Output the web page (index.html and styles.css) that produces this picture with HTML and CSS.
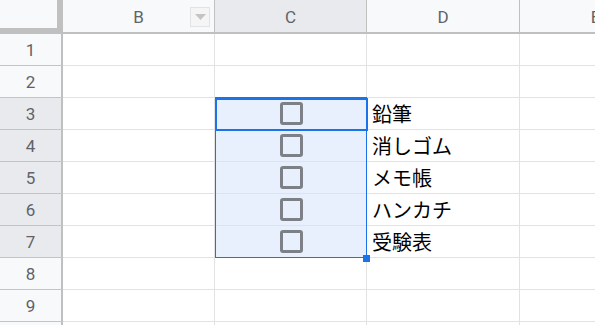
FILE: index.html
```html
<!DOCTYPE html>
<html lang="ja">
<head>
<meta charset="utf-8">
<link rel="stylesheet" href="styles.css">
</head>
<body>
<div class="sheet">
  <div class="corner"></div>
  <div class="colhead">B<span class="filter"><svg width="11" height="6" viewBox="0 0 11 6"><path d="M0 0H11L5.5 6Z" fill="#c4c4c4"/></svg></span></div>
  <div class="colhead sel">C</div>
  <div class="colhead">D</div>
  <div class="colhead">E</div>

  <div class="rowhead">1</div><div class="cell"></div><div class="cell"></div><div class="cell"></div><div class="cell"></div>
  <div class="rowhead">2</div><div class="cell"></div><div class="cell"></div><div class="cell"></div><div class="cell"></div>

  <div class="rowhead sel">3</div><div class="cell"></div><div class="cell hl"><span class="cb"></span></div><div class="cell text">鉛筆</div><div class="cell"></div>
  <div class="rowhead sel">4</div><div class="cell"></div><div class="cell hl"><span class="cb"></span></div><div class="cell text">消しゴム</div><div class="cell"></div>
  <div class="rowhead sel">5</div><div class="cell"></div><div class="cell hl"><span class="cb"></span></div><div class="cell text">メモ帳</div><div class="cell"></div>
  <div class="rowhead sel">6</div><div class="cell"></div><div class="cell hl"><span class="cb"></span></div><div class="cell text">ハンカチ</div><div class="cell"></div>
  <div class="rowhead sel">7</div><div class="cell"></div><div class="cell hl"><span class="cb"></span></div><div class="cell text">受験表</div><div class="cell"></div>

  <div class="rowhead">8</div><div class="cell"></div><div class="cell"></div><div class="cell"></div><div class="cell"></div>
  <div class="rowhead">9</div><div class="cell"></div><div class="cell"></div><div class="cell"></div><div class="cell"></div>
  <div class="rowhead"></div><div class="cell"></div><div class="cell"></div><div class="cell"></div><div class="cell"></div>

  <div class="range"></div>
  <div class="active"></div>
  <div class="handle"></div>
</div>
</body>
</html>
```

FILE: styles.css
```css
html, body {
  margin: 0;
  padding: 0;
  background: #ffffff;
  overflow: hidden;
}

.sheet {
  position: relative;
  display: grid;
  grid-template-columns: 63px 152px 152px 153px 152px;
  grid-template-rows: 34px repeat(10, 32px);
  width: 672px;
  font-family: Roboto, "Liberation Sans", Arial, sans-serif;
}

.sheet > div {
  box-sizing: border-box;
}

.corner {
  background: #f8f9fa;
  border-right: 6px solid #c0c0c0;
  border-bottom: 6px solid #c0c0c0;
}

.colhead {
  position: relative;
  background: #f8f9fa;
  border-right: 1px solid #c0c0c0;
  border-bottom: 2px solid #c0c0c0;
  display: flex;
  align-items: center;
  justify-content: center;
  font-size: 17px;
  color: #5f6368;
  padding-top: 1px;
}

.colhead.sel,
.rowhead.sel {
  background: #e8eaed;
}

.filter {
  position: absolute;
  left: 127px;
  top: 7px;
  width: 20px;
  height: 20px;
  box-sizing: border-box;
  border: 1px solid #e3e3e3;
  background: #f5f5f5;
  display: flex;
  align-items: center;
  justify-content: center;
}

.rowhead {
  background: #f8f9fa;
  border-right: 2px solid #c0c0c0;
  border-bottom: 1px solid #c4c4c4;
  display: flex;
  align-items: center;
  justify-content: center;
  font-size: 17px;
  color: #5f6368;
}

.cell {
  border-right: 1px solid #e2e2e2;
  border-bottom: 1px solid #e2e2e2;
  display: flex;
  align-items: center;
}

.cell.hl {
  background: #e8f0fe;
  justify-content: center;
}

.cb {
  display: block;
  width: 23px;
  height: 23px;
  box-sizing: border-box;
  border: 3px solid #7d8187;
  border-radius: 3px;
  margin-left: 1px;
}

.text {
  padding-left: 5px;
  font-family: "Noto Sans CJK JP", "Noto Sans", sans-serif;
  font-size: 20px;
  color: #000000;
  line-height: 1;
}

.range {
  position: absolute;
  left: 215px;
  top: 97px;
  width: 152px;
  height: 161px;
  box-sizing: border-box;
  border: 1px solid #1a73e8;
  pointer-events: none;
}

.active {
  position: absolute;
  left: 215px;
  top: 98px;
  width: 153px;
  height: 33px;
  box-sizing: border-box;
  border: 2px solid #1a73e8;
  pointer-events: none;
}

.handle {
  position: absolute;
  left: 363px;
  top: 255px;
  width: 7px;
  height: 7px;
  background: #1a73e8;
}
```
